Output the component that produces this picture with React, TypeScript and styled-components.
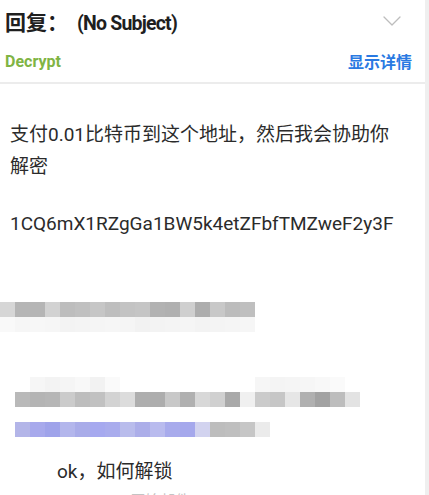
import {FC} from "react";
import styled, {createGlobalStyle} from "styled-components";

const GlobalStyle = createGlobalStyle`
	html,
	body {
		margin: 0;
		padding: 0;
		background: #efefef;
	}
	body {
		font-family: Roboto, "Noto Sans CJK SC", sans-serif;
		color: #2b2b2b;
	}
`;

const Page = styled.div`
	width: 425px;
	height: 495px;
	background: #ffffff;
	overflow: hidden;
`;

const Header = styled.header`
	display: flex;
	flex-direction: column;
	border-bottom: 2px solid #ececec;
`;

const TitleRow = styled.div`
	height: 42px;
	display: flex;
	align-items: center;
	justify-content: space-between;
	padding: 0 24px 0 5px;
`;

const Title = styled.h1`
	margin: 0;
	font-size: 21px;
	font-weight: 700;
	color: #1f1f1f;
	font-family: Roboto, "Noto Sans CJK SC", sans-serif;
`;

const Subject = styled.span`
	margin-left: 9px;
	font-size: 19.5px;
	letter-spacing: -0.8px;
`;

const MetaRow = styled.div`
	height: 38px;
	display: flex;
	align-items: center;
	justify-content: space-between;
	padding: 0 13px 2px 5px;
`;

const Decrypt = styled.span`
	font-size: 16px;
	font-weight: 700;
	color: #80b444;
`;

const DetailsLink = styled.span`
	font-size: 16px;
	font-weight: 700;
	color: #2a7ae2;
	font-family: "Noto Sans CJK SC", sans-serif;
`;

const Body = styled.main`
	padding-top: 35px;
	display: flex;
	flex-direction: column;
`;

const Paragraph = styled.p<{$mt?: number; $indent?: number}>`
	margin: ${({$mt}) => $mt ?? 0}px 0 0;
	padding-left: ${({$indent}) => $indent ?? 10}px;
	font-size: 19px;
	line-height: 32px;
	color: #2b2b2b;
	white-space: nowrap;
`;

const Faded = styled.p`
	margin: 2px 0 0;
	padding-left: 130px;
	font-size: 15px;
	line-height: 20px;
	color: #c4c4c4;
	font-family: "Noto Sans CJK SC", sans-serif;
`;

const MosaicRow = styled.div<{$mt: number; $left: number}>`
	display: flex;
	height: 15px;
	margin-top: ${({$mt}) => $mt}px;
	padding-left: ${({$left}) => $left}px;
`;

const Tile = styled.div<{$c: string}>`
	width: 15px;
	height: 15px;
	flex: none;
	background: ${({$c}) => $c};
`;

const row1 = [
	"#d6d6d6", "#b5b5b5", "#b5b5b5", "#d2d2d2", "#bdbdbd", "#c0c0c0",
	"#c6c6c6", "#bebebe", "#c3c3c3", "#c5c5c5", "#b2b2b2", "#b0b0b0",
	"#cfcfcf", "#adadad", "#c8c8c8", "#bcbcbc", "#bfbfbf",
];
const row1Shade = [
	"#f9f9f9", "#f6f6f6", "#f7f7f7", "#f6f6f6", "#f3f3f3", "#f4f4f4",
	"#f5f5f5", "#f6f6f6", "#f5f5f5", "#f2f2f2", "#f3f3f3", "#f4f4f4",
	"#f5f5f5", "#f3f3f3", "#f4f4f4", "#f5f5f5", "#f6f6f6",
];
const row2Shade = [
	"#ffffff", "#f6f6f6", "#f3f3f3", "#f5f5f5", "#f8f8f8", "#f2f2f2",
	"#fafafa", "#ffffff", "#ffffff", "#ffffff", "#ffffff", "#ffffff",
	"#ffffff", "#ffffff", "#ffffff", "#ffffff", "#f6f6f6", "#f4f4f4",
	"#f5f5f5", "#f6f6f6", "#f8f8f8", "#fafafa", "#ffffff",
];
const row2 = [
	"#b9b9b9", "#b4b4b4", "#b6b6b6", "#cbcbcb", "#bdbdbd", "#c1c1c1",
	"#d3d3d3", "#dcdcdc", "#aeaeae", "#adadad", "#c8c8c8", "#b0b0b0",
	"#d8d8d8", "#d0d0d0", "#a9a9a9", "#f0f0f0", "#cbcbcb", "#c6c6c6",
	"#e6e6e6", "#b0b0b0", "#a2a2a2", "#bdbdbd", "#e3e3e3",
];
const row3 = [
	"#b3b5e8", "#a7a9ec", "#9fa3ea", "#b3b6ec", "#a9ace9", "#a6a9ef",
	"#a9aced", "#b9bcec", "#acaee9", "#b9bbee", "#a8abec", "#a5a8ec",
	"#d2d3ef", "#bdbdbd", "#bfbfbf", "#c6c6c6", "#ebebeb",
];

const Mosaic: FC<{colors: string[]; mt: number; left: number}> = ({
	colors,
	mt,
	left,
}) => (
	<MosaicRow $mt={mt} $left={left}>
		{colors.map((c, i) => (
			<Tile key={i} $c={c} />
		))}
	</MosaicRow>
);

const Chevron = () => (
	<svg width="18" height="10" viewBox="0 0 18 10" fill="none">
		<polyline
			points="1,1 9,9 17,1"
			stroke="#bdbdbd"
			strokeWidth="1.3"
			strokeLinecap="round"
			strokeLinejoin="round"
		/>
	</svg>
);

const App: FC = () => {
	return (
		<Page>
			<GlobalStyle />
			<Header>
				<TitleRow>
					<Title>
						回复：<Subject>(No Subject)</Subject>
					</Title>
					<Chevron />
				</TitleRow>
				<MetaRow>
					<Decrypt>Decrypt</Decrypt>
					<DetailsLink>显示详情</DetailsLink>
				</MetaRow>
			</Header>
			<Body>
				<Paragraph>
					支付0.01比特币到这个地址，然后我会协助你
					<br />
					解密
				</Paragraph>
				<Paragraph $mt={25}>1CQ6mX1RZgGa1BW5k4etZFbfTMZweF2y3F</Paragraph>
				<Mosaic colors={row1} mt={62} left={0} />
				<Mosaic colors={row1Shade} mt={0} left={0} />
				<Mosaic colors={row2Shade} mt={45} left={15} />
				<Mosaic colors={row2} mt={0} left={15} />
				<Mosaic colors={row3} mt={15} left={15} />
				<Paragraph $mt={19} $indent={57}>
					ok，如何解锁
				</Paragraph>
				<Faded>原始邮件</Faded>
			</Body>
		</Page>
	);
};

export default App;
